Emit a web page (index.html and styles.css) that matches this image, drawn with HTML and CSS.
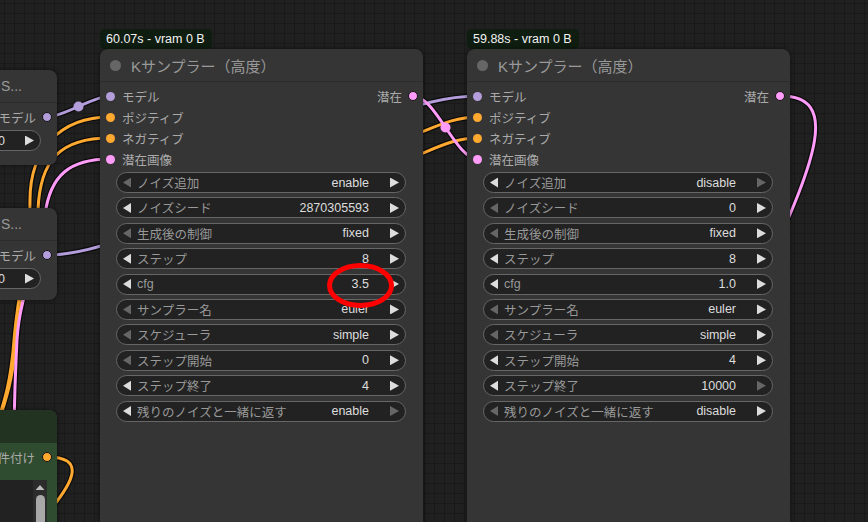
FILE: index.html
```html
<!DOCTYPE html>
<html lang="ja">
<head>
<meta charset="utf-8">
<title>Kサンプラー</title>
<link rel="stylesheet" href="styles.css">
</head>
<body>
<div class="canvas">
  <svg class="links" width="868" height="522" viewBox="0 0 868 522">
    <g class="outline">
      <path d="M47,117 C63.6,117 93.4,96 110,96"/>
      <path d="M47,255 C162,255 350,96 478,96"/>
      <path d="M110,117 C60,117 30,150 30,200 C30,250 18,290 14,340 C11,380 5,400 -5,430"/>
      <path d="M110,138 C60,138 40,160 38,210 C36,255 20,290 16,340 C13,380 6,400 -4,430"/>
      <path d="M110,159 C70,159 50,175 45,215 C40,260 20,290 17,340 C15,380 14,400 13,530"/>
      <path d="M360,150 C420,140 440,117 478,117"/>
      <path d="M360,172 C420,162 440,138 478,138"/>
      <path d="M413,96 C435.6,96 455.4,159 478,159"/>
      <path d="M781,96 C840,96 815,160 770,260"/>
      <path d="M47,457 C85,457 75,480 50,510"/>
    </g>
    <g class="lk model">
      <path d="M47,117 C63.6,117 93.4,96 110,96"/>
      <path d="M47,255 C162,255 350,96 478,96"/>
      <circle cx="78.5" cy="106.5" r="5"/>
    </g>
    <g class="lk cond">
      <path d="M110,117 C60,117 30,150 30,200 C30,250 18,290 14,340 C11,380 5,400 -5,430"/>
      <path d="M110,138 C60,138 40,160 38,210 C36,255 20,290 16,340 C13,380 6,400 -4,430"/>
      <path d="M360,150 C420,140 440,117 478,117"/>
      <path d="M360,172 C420,162 440,138 478,138"/>
      <path d="M47,457 C85,457 75,480 50,510"/>
    </g>
    <g class="lk latent">
      <path d="M110,159 C70,159 50,175 45,215 C40,260 20,290 17,340 C15,380 14,400 13,530"/>
      <path d="M413,96 C435.6,96 455.4,159 478,159"/>
      <path d="M781,96 C840,96 815,160 770,260"/>
      <circle cx="445.5" cy="127.5" r="5"/>
    </g>
  </svg>

  <!-- left partial nodes -->
  <div class="node side sa">
    <div class="title right"><span>S...</span></div>
    <div class="slots">
      <div class="row end"><span class="out">モデル<i class="dot m o"></i></span></div>
    </div>
    <div class="widgets">
      <div class="w"><i class="al off"></i><span class="wv">0</span><i class="ar"></i></div>
    </div>
  </div>

  <div class="node side sb">
    <div class="title right"><span>S...</span></div>
    <div class="slots">
      <div class="row end"><span class="out">モデル<i class="dot m o"></i></span></div>
    </div>
    <div class="widgets">
      <div class="w"><i class="al off"></i><span class="wv">0</span><i class="ar"></i></div>
    </div>
  </div>

  <div class="node green sc">
    <div class="title ghead"></div>
    <div class="slots">
      <div class="row end"><span class="out">件付け<i class="dot c o"></i></span></div>
    </div>
    <div class="tarea">
      <div class="tbox"></div>
      <div class="sbar"><i class="sup"></i><i class="thumb"></i></div>
    </div>
  </div>

  <!-- node 1 -->
  <div class="nodewrap n1">
    <div class="badge">60.07s - vram 0 B</div>
    <div class="node main">
      <div class="title"><i class="tdot"></i><span>Kサンプラー（高度）</span></div>
      <div class="slots">
        <div class="row"><span class="in"><i class="dot m"></i>モデル</span><span class="out">潜在<i class="dot l o"></i></span></div>
        <div class="row"><span class="in"><i class="dot c"></i>ポジティブ</span></div>
        <div class="row"><span class="in"><i class="dot c"></i>ネガティブ</span></div>
        <div class="row"><span class="in"><i class="dot l"></i>潜在画像</span></div>
      </div>
      <div class="widgets">
        <div class="w"><i class="al off"></i><span class="wl">ノイズ追加</span><span class="wv">enable</span><i class="ar"></i></div>
        <div class="w"><i class="al"></i><span class="wl">ノイズシード</span><span class="wv">2870305593</span><i class="ar"></i></div>
        <div class="w"><i class="al off"></i><span class="wl">生成後の制御</span><span class="wv">fixed</span><i class="ar"></i></div>
        <div class="w"><i class="al"></i><span class="wl">ステップ</span><span class="wv">8</span><i class="ar"></i></div>
        <div class="w"><i class="al"></i><span class="wl">cfg</span><span class="wv">3.5</span><i class="ar"></i></div>
        <div class="w"><i class="al off"></i><span class="wl">サンプラー名</span><span class="wv">euler</span><i class="ar"></i></div>
        <div class="w"><i class="al off"></i><span class="wl">スケジューラ</span><span class="wv">simple</span><i class="ar"></i></div>
        <div class="w"><i class="al off"></i><span class="wl">ステップ開始</span><span class="wv">0</span><i class="ar"></i></div>
        <div class="w"><i class="al"></i><span class="wl">ステップ終了</span><span class="wv">4</span><i class="ar"></i></div>
        <div class="w"><i class="al"></i><span class="wl">残りのノイズと一緒に返す</span><span class="wv">enable</span><i class="ar off"></i></div>
      </div>
    </div>
  </div>

  <!-- node 2 -->
  <div class="nodewrap n2">
    <div class="badge">59.88s - vram 0 B</div>
    <div class="node main">
      <div class="title"><i class="tdot"></i><span>Kサンプラー（高度）</span></div>
      <div class="slots">
        <div class="row"><span class="in"><i class="dot m"></i>モデル</span><span class="out">潜在<i class="dot l o"></i></span></div>
        <div class="row"><span class="in"><i class="dot c"></i>ポジティブ</span></div>
        <div class="row"><span class="in"><i class="dot c"></i>ネガティブ</span></div>
        <div class="row"><span class="in"><i class="dot l"></i>潜在画像</span></div>
      </div>
      <div class="widgets">
        <div class="w"><i class="al"></i><span class="wl">ノイズ追加</span><span class="wv">disable</span><i class="ar off"></i></div>
        <div class="w"><i class="al off"></i><span class="wl">ノイズシード</span><span class="wv">0</span><i class="ar"></i></div>
        <div class="w"><i class="al off"></i><span class="wl">生成後の制御</span><span class="wv">fixed</span><i class="ar"></i></div>
        <div class="w"><i class="al"></i><span class="wl">ステップ</span><span class="wv">8</span><i class="ar"></i></div>
        <div class="w"><i class="al"></i><span class="wl">cfg</span><span class="wv">1.0</span><i class="ar"></i></div>
        <div class="w"><i class="al off"></i><span class="wl">サンプラー名</span><span class="wv">euler</span><i class="ar"></i></div>
        <div class="w"><i class="al off"></i><span class="wl">スケジューラ</span><span class="wv">simple</span><i class="ar"></i></div>
        <div class="w"><i class="al"></i><span class="wl">ステップ開始</span><span class="wv">4</span><i class="ar"></i></div>
        <div class="w"><i class="al"></i><span class="wl">ステップ終了</span><span class="wv">10000</span><i class="ar off"></i></div>
        <div class="w"><i class="al off"></i><span class="wl">残りのノイズと一緒に返す</span><span class="wv">disable</span><i class="ar"></i></div>
      </div>
    </div>
  </div>

  <svg class="mark" width="868" height="522" viewBox="0 0 868 522">
    <ellipse cx="360.5" cy="285.5" rx="31" ry="20" fill="none" stroke="#ff0000" stroke-width="5"/>
  </svg>
</div>
</body>
</html>
```

FILE: styles.css
```css
html, body {
  margin: 0;
  padding: 0;
  background: #202020;
}

.canvas {
  position: relative;
  width: 868px;
  height: 522px;
  overflow: hidden;
  background-color: #202020;
  background-image:
    linear-gradient(#191919 1px, transparent 1px),
    linear-gradient(90deg, #191919 1px, transparent 1px);
  background-size: 10px 10px;
  background-position: 4px 3px;
  font-family: "Liberation Sans", "Noto Sans CJK JP", sans-serif;
  font-size: 12.5px;
}

/* links */
.links {
  position: absolute;
  left: 0;
  top: 0;
}
.links path {
  fill: none;
  stroke-linecap: round;
}
.outline path {
  stroke: rgba(0, 0, 0, 0.65);
  stroke-width: 5.5;
}
.lk path { stroke-width: 3; }
.lk.model path { stroke: #b39ddb; }
.lk.model circle { fill: #b39ddb; }
.lk.cond path { stroke: #ffa931; }
.lk.latent path { stroke: #ff9cf9; }
.lk.latent circle { fill: #ff9cf9; }

.mark {
  position: absolute;
  left: 0;
  top: 0;
}

/* nodes */
.nodewrap {
  position: absolute;
  top: 29px;
  display: flex;
  flex-direction: column;
  align-items: flex-start;
}
.n1 { left: 100px; }
.n2 { left: 467px; }

.badge {
  height: 20px;
  line-height: 20px;
  padding: 0 7px 0 6px;
  background: #0f1c10;
  color: #f2f2f2;
  border-radius: 5px;
  font-size: 12.5px;
}

.node {
  background: #353535;
  border-radius: 8px;
  box-shadow: 0 0 4px rgba(0, 0, 0, 0.55);
  box-sizing: border-box;
}
.node.main {
  width: 323px;
  height: 480px;
}

.title {
  height: 32px;
  display: flex;
  align-items: center;
  gap: 10px;
  padding-left: 10px;
  border-bottom: 1px solid #2c2c2c;
  color: #999;
  font-size: 15px;
}
.title.right {
  justify-content: flex-end;
  padding-right: 35px;
  font-size: 14px;
}
.tdot {
  width: 11px;
  height: 11px;
  border-radius: 50%;
  background: #666;
}

.slots {
  padding-top: 3.5px;
}
.row {
  height: 21px;
  display: flex;
  align-items: center;
  justify-content: space-between;
  padding: 0 5px 0 6px;
  color: #aaa;
}
.row.end { justify-content: flex-end; }
.in {
  display: flex;
  align-items: center;
  gap: 7px;
}
.out {
  display: flex;
  align-items: center;
  gap: 6px;
}
.dot {
  display: block;
  width: 9px;
  height: 9px;
  border-radius: 50%;
}
.dot.o {
  width: 10px;
  height: 10px;
  box-sizing: border-box;
  border: 1.5px solid #141414;
}
.dot.m { background: #b39ddb; }
.dot.c { background: #ffa931; }
.dot.l { background: #ff9cf9; }

/* widgets */
.widgets {
  display: flex;
  flex-direction: column;
  gap: 4.4px;
  padding: 2.5px 17px 0 16px;
}
.w {
  height: 21px;
  box-sizing: border-box;
  display: flex;
  align-items: center;
  padding: 0 6px;
  border: 1px solid #666;
  border-radius: 11px;
  background: #222;
  white-space: nowrap;
}
.al, .ar {
  display: block;
  flex: none;
  height: 10px;
  background: #ddd;
}
.al {
  width: 8px;
  clip-path: polygon(100% 0, 0 50%, 100% 100%);
}
.ar {
  width: 9px;
  clip-path: polygon(0 0, 100% 50%, 0 100%);
}
.al.off, .ar.off { background: #666; }
.wl {
  flex: 1;
  margin-left: 6px;
  color: #999;
  overflow: hidden;
}
.wv {
  color: #ddd;
  margin-right: 21px;
}

/* partial left nodes */
.side {
  position: absolute;
  left: -100px;
  width: 157px;
}
.sa { top: 70px; height: 95px; }
.sb { top: 208px; height: 92px; }
.side .widgets { padding: 2.5px 16px 0 16px; }
.side .wv { margin-left: auto; margin-right: 20px; }

.green {
  position: absolute;
  left: -100px;
  top: 410px;
  width: 157px;
  height: 130px;
  background: #304c30;
}
.ghead {
  height: 33px;
  background: #223322;
  border-radius: 8px 8px 0 0;
  border-bottom: none;
}
.green .row { color: #aaa; }
.green .out { gap: 7px; }
.tarea {
  margin: 12.5px 10px 0 10px;
  height: 60px;
  display: flex;
  background: #222;
}
.tbox { flex: 1; }
.sbar {
  width: 14px;
  background: #2c2c2c;
  display: flex;
  flex-direction: column;
  align-items: center;
  padding-top: 5px;
  box-sizing: border-box;
}
.sup {
  display: block;
  width: 9px;
  height: 5px;
  background: #bbb;
  clip-path: polygon(50% 0, 100% 100%, 0 100%);
}
.thumb {
  display: block;
  margin-top: 5px;
  width: 9px;
  height: 40px;
  border-radius: 5px;
  background: #a8a8a8;
}
```
